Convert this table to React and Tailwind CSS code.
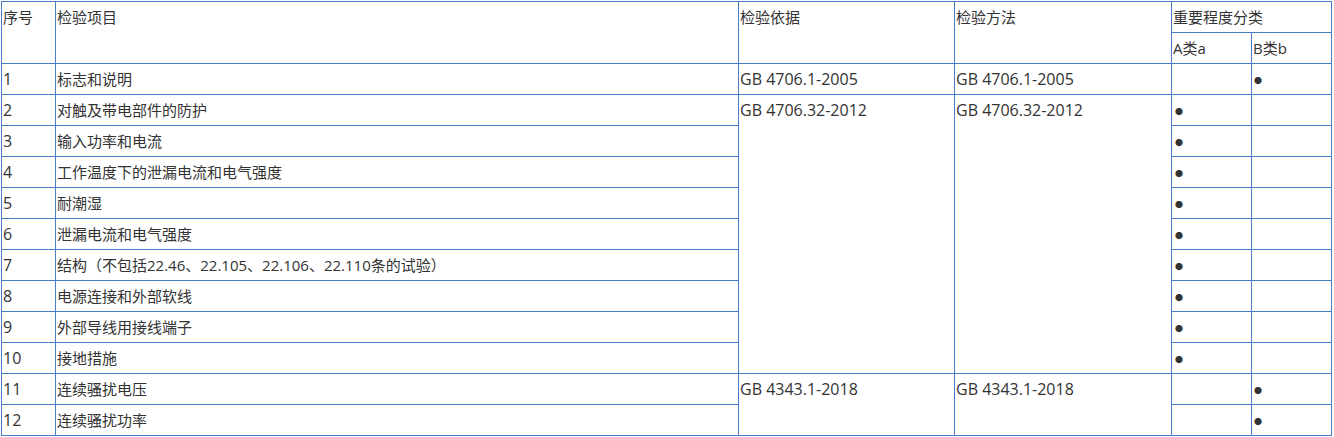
import React from 'react';

const rows = [
  { no: '1', item: '标志和说明', grade: 'B' },
  { no: '2', item: '对触及带电部件的防护', grade: 'A' },
  { no: '3', item: '输入功率和电流', grade: 'A' },
  { no: '4', item: '工作温度下的泄漏电流和电气强度', grade: 'A' },
  { no: '5', item: '耐潮湿', grade: 'A' },
  { no: '6', item: '泄漏电流和电气强度', grade: 'A' },
  { no: '7', item: '结构（不包括22.46、22.105、22.106、22.110条的试验）', grade: 'A' },
  { no: '8', item: '电源连接和外部软线', grade: 'A' },
  { no: '9', item: '外部导线用接线端子', grade: 'A' },
  { no: '10', item: '接地措施', grade: 'A' },
  { no: '11', item: '连续骚扰电压', grade: 'B' },
  { no: '12', item: '连续骚扰功率', grade: 'B' },
];

// standards span several rows
const standards = {
  0: { text: 'GB 4706.1-2005', span: 1 },
  1: { text: 'GB 4706.32-2012', span: 9 },
  10: { text: 'GB 4343.1-2018', span: 2 },
};

const cell = 'border border-[#4a7bc8] align-top px-px pt-px leading-[29px] h-[31px]';
const dot = <span className="text-[8px] leading-none relative top-[-1px]">●</span>;

export default function App() {
  return (
    <div className="bg-white w-[1334px] h-[437px] pt-px pl-px text-[15px] text-[#333]" style={{ fontFamily: '"Open Sans", "Noto Sans CJK SC", sans-serif' }}>
      <table className="table-fixed border-collapse w-[1330px]">
        <colgroup>
          <col className="w-[54px]" />
          <col className="w-[683px]" />
          <col className="w-[216px]" />
          <col className="w-[217px]" />
          <col className="w-[80px]" />
          <col className="w-[80px]" />
        </colgroup>
        <thead>
          <tr>
            <th rowSpan={2} className={`${cell} font-normal text-left`}>序号</th>
            <th rowSpan={2} className={`${cell} font-normal text-left`}>检验项目</th>
            <th rowSpan={2} className={`${cell} font-normal text-left`}>检验依据</th>
            <th rowSpan={2} className={`${cell} font-normal text-left`}>检验方法</th>
            <th colSpan={2} className={`${cell} font-normal text-left`}>重要程度分类</th>
          </tr>
          <tr>
            <th className={`${cell} font-normal text-left`}>A类a</th>
            <th className={`${cell} font-normal text-left`}>B类b</th>
          </tr>
        </thead>
        <tbody>
          {rows.map((r, i) => (
            <tr key={r.no}>
              <td className={`${cell} text-[16px]`}>{r.no}</td>
              <td className={cell}>{r.item}</td>
              {standards[i] && (
                <>
                  <td rowSpan={standards[i].span} className={`${cell} text-[16px]`}>{standards[i].text}</td>
                  <td rowSpan={standards[i].span} className={`${cell} text-[16px]`}>{standards[i].text}</td>
                </>
              )}
              <td className={`${cell} pl-[3px]`}>{r.grade === 'A' ? dot : null}</td>
              <td className={`${cell} pl-[2px]`}>{r.grade === 'B' ? dot : null}</td>
            </tr>
          ))}
        </tbody>
      </table>
    </div>
  );
}
